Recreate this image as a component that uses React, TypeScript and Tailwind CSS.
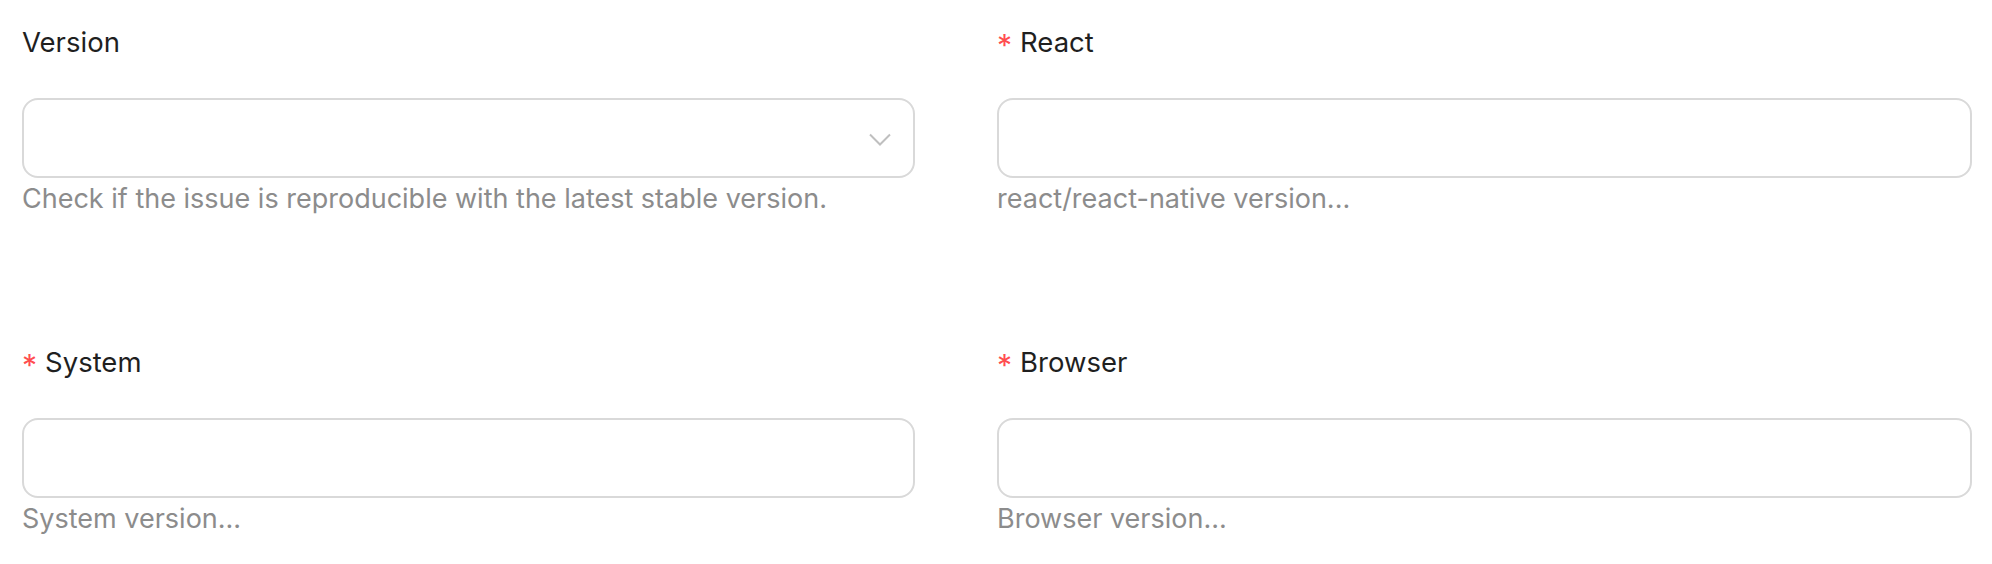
import React from "react";

type Field = {
  label: string;
  required?: boolean;
  help: string;
  select?: boolean;
};

const left: Field[] = [
  { label: "Version", help: "Check if the issue is reproducible with the latest stable version.", select: true },
  { label: "System", required: true, help: "System version..." },
];

const right: Field[] = [
  { label: "React", required: true, help: "react/react-native version..." },
  { label: "Browser", required: true, help: "Browser version..." },
];

function FormItem({ field }: { field: Field }) {
  return (
    <div className="flex flex-col shrink-0 h-[320px]">
      <label className="flex items-center h-[44px] text-[27.5px] leading-[44px] text-[#1f1f1f]">
        {field.required && (
          <span className="text-[#ff4d4f] mr-[8px] mt-[5px] text-[30px]">*</span>
        )}
        {field.label}
      </label>
      <div className="mt-[34px] relative h-[80px] shrink-0 rounded-[16px] border-2 border-[#d9d9d9] bg-white">
        {field.select && (
          <svg
            className="absolute right-[22px] top-[33px]"
            width="22"
            height="13"
            viewBox="0 0 22 13"
            fill="none"
          >
            <path d="M1 1.5 L11 11.5 L21 1.5" stroke="#bfbfbf" strokeWidth="2" />
          </svg>
        )}
      </div>
      <div className="h-[42px] text-[27px] leading-[42px] text-[#8c8c8c]">{field.help}</div>
    </div>
  );
}

export default function App() {
  return (
    <div
      className="w-[1992px] h-[564px] overflow-hidden bg-white pt-[20px] pl-[22px] flex items-start gap-[82px]"
      style={{ fontFamily: "Inter, 'Noto Sans', sans-serif" }}
    >
      <div className="w-[893px] flex flex-col">
        {left.map((f) => (
          <FormItem key={f.label} field={f} />
        ))}
      </div>
      <div className="w-[975px] flex flex-col">
        {right.map((f) => (
          <FormItem key={f.label} field={f} />
        ))}
      </div>
    </div>
  );
}
